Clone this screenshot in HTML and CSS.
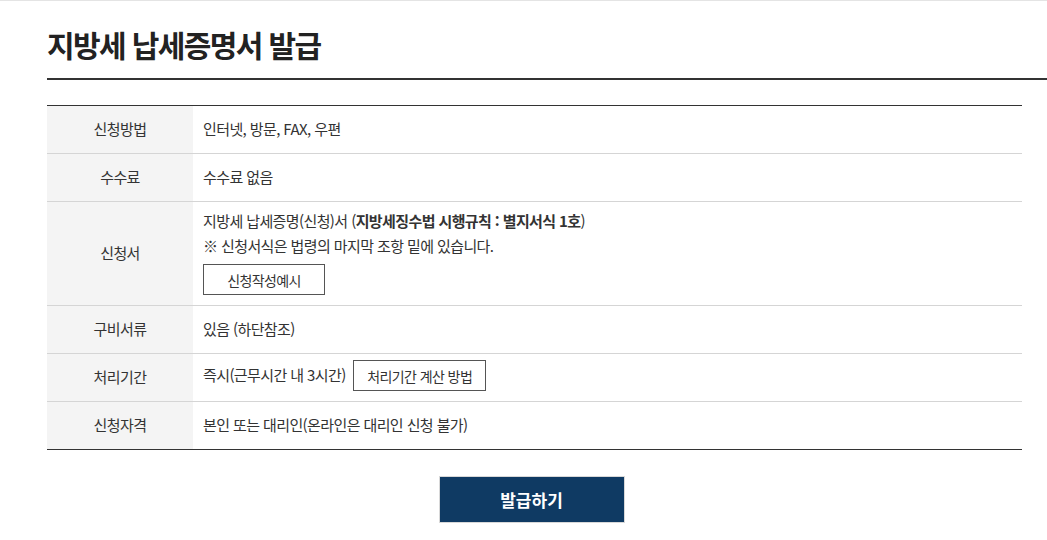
FILE: index.html
```html
<!DOCTYPE html>
<html lang="ko">
<head>
    <meta charset="UTF-8">
    <title>지방세 납세증명서 발급</title>
    <link rel="stylesheet" href="styles.css">
</head>
<body>
<div class="page">
    <div class="title-bar">
        <h1>지방세 납세증명서 발급</h1>
    </div>

    <table class="info-table">
        <tr>
            <th>신청방법</th>
            <td>인터넷, 방문, FAX, 우편</td>
        </tr>
        <tr>
            <th>수수료</th>
            <td>수수료 없음</td>
        </tr>
        <tr>
            <th>신청서</th>
            <td class="multi">
                <p>지방세 납세증명(신청)서 (<strong>지방세징수법 시행규칙 : 별지서식 1호</strong>)</p>
                <p>※ 신청서식은 법령의 마지막 조항 밑에 있습니다.</p>
                <button type="button" class="line-btn sample-btn">신청작성예시</button>
            </td>
        </tr>
        <tr>
            <th>구비서류</th>
            <td>있음 (하단참조)</td>
        </tr>
        <tr>
            <th>처리기간</th>
            <td class="with-btn">즉시(근무시간 내 3시간) <button type="button" class="line-btn">처리기간 계산 방법</button></td>
        </tr>
        <tr>
            <th>신청자격</th>
            <td>본인 또는 대리인(온라인은 대리인 신청 불가)</td>
        </tr>
    </table>

    <div class="actions">
        <button type="button" class="issue-btn">발급하기</button>
    </div>
</div>
</body>
</html>
```

FILE: styles.css
```css
body {
    margin: 0;
    font-family: "Noto Sans CJK KR", "Noto Sans", sans-serif;
    color: #333;
    background: #fff;
    border-top: 1px solid #e4e4e4;
}

.page {
    padding: 0 0 0 47px;
}

.title-bar {
    border-bottom: 2px solid #333;
    padding: 22px 0 13px;
}

.title-bar h1 {
    margin: 0;
    font-size: 30px;
    font-weight: 700;
    line-height: 42px;
    letter-spacing: -1.6px;
    color: #222;
}

.info-table {
    width: 975px;
    margin-top: 25px;
    border-collapse: collapse;
    border-top: 1px solid #333;
    border-bottom: 1px solid #333;
    font-size: 15px;
    letter-spacing: -0.6px;
}

.info-table th,
.info-table td {
    border-top: 1px solid #d5d5d5;
    height: 48px;
    padding: 0 10px 2px;
    line-height: 25px;
    box-sizing: border-box;
}

.info-table tr:first-child th,
.info-table tr:first-child td {
    border-top: none;
}

.info-table th {
    width: 146px;
    background-color: #f4f4f4;
    font-weight: 400;
    text-align: center;
}

.info-table td {
    text-align: left;
}

.info-table td.multi {
    padding-top: 6px;
    padding-bottom: 10px;
}

.info-table p {
    margin: 0;
}

.info-table strong {
    font-weight: 700;
}

.line-btn {
    font-family: inherit;
    font-size: 14px;
    letter-spacing: -0.6px;
    color: #333;
    background: #fff;
    border: 1px solid #555;
    height: 31px;
    padding: 0 13px;
    cursor: pointer;
    vertical-align: middle;
}

.sample-btn {
    display: block;
    width: 122px;
    margin-top: 6px;
}

.with-btn .line-btn {
    margin-left: 4px;
    margin-bottom: 2px;
}

.actions {
    width: 975px;
    display: flex;
    justify-content: center;
    margin-top: 26px;
}

.issue-btn {
    width: 186px;
    height: 47px;
    margin-left: -6px;
    background-color: #0f3a63;
    border: 1px solid #d8d8d8;
    color: #fff;
    font-family: inherit;
    font-size: 17px;
    font-weight: 700;
    cursor: pointer;
}
```
